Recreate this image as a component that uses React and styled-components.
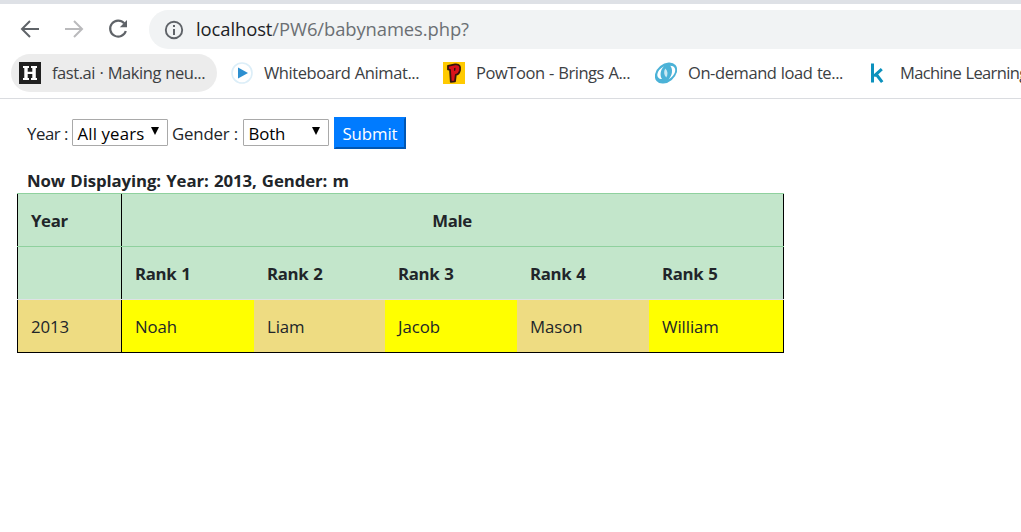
import React from "react";
import styled, { createGlobalStyle } from "styled-components";

const Global = createGlobalStyle`
  * { box-sizing: border-box; }
  html, body { margin: 0; height: 532px; overflow: hidden; background: #fff; }
  body { font-family: "Open Sans", "Noto Sans", sans-serif; font-size: 16.8px; color: #212529; }
`;
const Page = styled.div`width: 1021px; height: 532px; overflow: hidden;`;
const TabEdge = styled.div`height: 4px; background: #dee1e6;`;
const Toolbar = styled.div`
  display: flex; align-items: center; height: 50px; padding: 0 0 1px 19px;
`;
const NavIcon = styled.svg`
  display: block; flex: none; width: 22px; height: 22px; margin-right: 22px;
  fill: none; stroke: ${(p) => (p.$off ? "#bababc" : "#5f6368")}; stroke-width: 2;
`;
const Omnibox = styled.div`
  display: flex; align-items: center; flex: 1; height: 39px; margin: 2px 0 0 -2px; padding-left: 15px;
  border-radius: 20px 0 0 20px; background: #f1f3f4; color: #6b6f73;
  font-size: 18.4px; letter-spacing: -0.08px; white-space: nowrap;
`;
const InfoIcon = styled.svg`flex: none; width: 20px; height: 20px; margin: 0 12px 0 0;`;
const Url = styled.span`padding-bottom: 2px;`;
const Host = styled.span`color: #202124;`;
const Bookmarks = styled.div`
  display: flex; gap: 6px; height: 45px; padding-left: 11px; border-bottom: 1px solid #dadce0;
`;
const Bookmark = styled.div`
  display: flex; align-items: center; flex: none; width: 206px; height: 38px; padding-left: 8px;
  border-radius: 19px; background: ${(p) => (p.$active ? "#ececec" : "transparent")};
  color: #3c4043; font-size: 16.5px; letter-spacing: ${(p) => p.$track}px; white-space: nowrap;
`;
const BookmarkTitle = styled.span`padding-bottom: 2px; word-spacing: 0.5px;`;
const Favicon = styled.svg`flex: none; width: 22px; height: 22px; margin-right: 11px;`;
const Form = styled.form`
  display: flex; align-items: center; height: 32px; margin: 18px 0 0 27px; white-space: nowrap;
`;
const Label = styled.label`width: ${(p) => p.$width}px; letter-spacing: ${(p) => p.$track}px;`;
const Select = styled.div`
  display: flex; align-items: center; justify-content: space-between; height: 27px;
  width: ${(p) => p.$width}px; margin: 0 ${(p) => p.$after}px 1px 0; padding: 1px 8px 0 4.5px;
  border: 1px solid #a9a9a9; border-radius: 1px; color: #000; letter-spacing: ${(p) => p.$track}px;
`;
const Caret = styled.svg`flex: none; width: 8px; height: 8px; margin-top: -4px;`;
const Submit = styled.button`
  width: 72px; height: 32px; padding: 0; border: 2px solid; border-color: #007bff #0056b3 #0056b3 #007bff;
  background: #007bff; color: #fff; font: inherit; letter-spacing: -0.08px;
`;
const Heading = styled.div`
  height: 25px; margin: 19px 0 0 27px; font-size: 16.8px; line-height: 25px; font-weight: 700;
  letter-spacing: -0.1px; word-spacing: 1px; white-space: nowrap;
`;
const Table = styled.div`width: 767px; margin-left: 17px; border-bottom: 1px solid #000;`;
const Row = styled.div`
  display: grid; height: 53px; border-top: 1px solid ${(p) => p.$line};
  grid-template-columns: ${(p) => (p.$merged ? "105px 662px" : "105px 132px 131px 132px 132px 135px")};
`;
const Cell = styled.div`
  display: flex; align-items: center; justify-content: ${(p) => (p.$center ? "center" : "flex-start")};
  padding: 0 0 0 13px; background: ${(p) => p.$bg}; font-weight: ${(p) => (p.$head ? 700 : 400)};
  letter-spacing: ${(p) => (p.$head ? -0.35 : -0.08)}px; word-spacing: 1px;
  &:first-child { border-left: 1px solid #000; border-right: 1px solid #000; padding-left: 13px; }
  &:last-child { border-right: 1px solid #000; padding-right: ${(p) => (p.$center ? 14 : 0)}px; }
`;

const GREEN = "#c3e6cb";
const GOLD = "#eedc82";
const YELLOW = "#ffff00";
const names = ["Noah", "Liam", "Jacob", "Mason", "William"];

const HIcon = () => (
  <Favicon viewBox="0 0 22 22">
    <rect width="22" height="22" fill="#202020" />
    <path d="M4 4h6v2H8.7v3.8h4.6V6H12V4h6v2h-1.2v10H18v2h-6v-2h1.3v-4H8.7v4H10v2H4v-2h1.3V6H4z" fill="#fff" />
  </Favicon>
);
const PlayIcon = () => (
  <Favicon viewBox="0 0 22 22">
    <circle cx="11" cy="11" r="10" fill="#fff" stroke="#dceef8" strokeWidth="1.6" />
    <path d="M7 5.5 17 11 7 16.5z" fill="#2d8fd0" />
  </Favicon>
);
const PowIcon = () => (
  <Favicon viewBox="0 0 22 22">
    <rect width="22" height="22" fill="#ffca00" />
    <path d="M5 3.8 12 2.4c4.5-.5 5.8 2 5 5.8-.6 2.5-2 4.3-4.2 4.6l-.8 6.5-4.2.5L7 7.8 5 7.4z" fill="#d9131b" stroke="#35150b" strokeWidth="1.8" strokeLinejoin="round" />
    <path d="m11 6 1.6-.2-.2 2.8-1.4.4z" fill="#35150b" />
  </Favicon>
);
const RingIcon = () => (
  <Favicon viewBox="0 0 22 22">
    <ellipse cx="11" cy="11" rx="12.4" ry="9" transform="rotate(-40 11 11)" fill="#4bb2d7" />
    <path d="M9 4.2C3.8 7 1 12 3 15.3c.8 1.3 2.3 1.8 4 1.8C4.6 13.500 5.200 8 9 4.200z" fill="#fff" />
    <path d="M13.500 17.500c5-3 8-8 6.200-11.500-.8-1.500-2.400-2.200-4.400-2.200 2.800 3.700 2.200 9.500-1.800 13.700z" fill="#fff" />
    <path d="M10.300 6.500c-1.800 3-1.500 6.500 1 9 1.800-3 1.600-6.500-1-9z" fill="#c9e9f4" />
  </Favicon>
);
const KIcon = () => (
  <Favicon viewBox="0 0 22 22" fill="none" stroke="#0c91bd" strokeWidth="3">
    <path d="M5.5 1.5v19M14.8 7.2 7 14.2M9 12l6.2 8.2" />
  </Favicon>
);
const bookmarks = [
  [HIcon, "fast.ai · Making neu...", -0.44],
  [PlayIcon, "Whiteboard Animat...", -0.42],
  [PowIcon, "PowToon - Brings A...", -0.44],
  [RingIcon, "On-demand load te...", -0.42],
  [KIcon, "Machine Learning", -0.62],
];
const Arrow = () => <Caret viewBox="0 0 8 8"><path d="M0 0h8L4 8z" fill="#000" /></Caret>;

export default function App() {
  return (
    <Page>
      <Global />
      <TabEdge />
      <Toolbar>
        <NavIcon viewBox="0 0 22 22"><path d="M20 11H3.5M11 3l-8 8 8 8" /></NavIcon>
        <NavIcon viewBox="0 0 22 22" $off><path d="M2 11h16.5M11 3l8 8-8 8" /></NavIcon>
        <NavIcon viewBox="0 0 22 22">
          <path d="M17.2 5.3A8 8 0 1 0 18.8 13" strokeWidth="2.2" />
          <path d="M20 2v7.2h-7.2z" fill="#5f6368" stroke="none" />
        </NavIcon>
        <Omnibox>
          <InfoIcon viewBox="0 0 20 20">
            <circle cx="10" cy="10" r="8.2" fill="none" stroke="#5f6368" strokeWidth="1.9" />
            <path d="M9 5h2v2H9zM9 9h2v6H9z" fill="#5f6368" />
          </InfoIcon>
          <Url><Host>localhost</Host>/PW6/babynames.php?</Url>
        </Omnibox>
      </Toolbar>
      <Bookmarks>
        {bookmarks.map(([Icon, title, track], i) => (
          <Bookmark key={title} $active={i === 0} $track={track}><Icon /><BookmarkTitle>{title}</BookmarkTitle></Bookmark>
        ))}
      </Bookmarks>
      <Form>
        <Label $width={45} $track={-0.45}>Year :</Label>
        <Select $width={96} $after={4} $track={0.15}>All years<Arrow /></Select>
        <Label $width={71} $track={-0.15}>Gender :</Label>
        <Select $width={86} $after={5} $track={-0.15}>Both<Arrow /></Select>
        <Submit type="button">Submit</Submit>
      </Form>
      <Heading>Now Displaying: Year: 2013, Gender: m</Heading>
      <Table>
        <Row $line="#8fd19e" $merged>
          <Cell $head $bg={GREEN}>Year</Cell>
          <Cell $head $center $bg={GREEN}>Male</Cell>
        </Row>
        <Row $line="#8fd19e">
          <Cell $head $bg={GREEN} />
          {names.map((n, i) => <Cell key={n} $head $bg={GREEN}>Rank {i + 1}</Cell>)}
        </Row>
        <Row $line="#dee2e6">
          <Cell $bg={GOLD}>2013</Cell>
          {names.map((n, i) => <Cell key={n} $bg={i % 2 ? GOLD : YELLOW}>{n}</Cell>)}
        </Row>
      </Table>
    </Page>
  );
}
